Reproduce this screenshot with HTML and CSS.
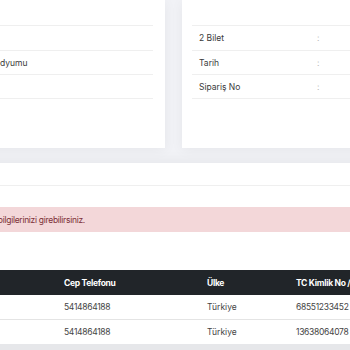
FILE: index.html
```html
<!doctype html>
<html>
<head>
    <meta charset="utf-8">
    <title>Bilet Bilgileri</title>
    <meta name="viewport" content="width=device-width, initial-scale=1">
    <link rel="stylesheet" href="styles.css">
</head>
<body class="bilet-body">
<div class="bilet-page">

    <!-- ust kartlar -->
    <div class="bilet-cards">
        <div class="bilet-card bilet-card-left">
            <div class="bilet-row bilet-row-first"><span>Etkinlik</span><span class="bilet-colon">:</span><span></span></div>
            <div class="bilet-row"><span></span><span class="bilet-colon"></span><span></span></div>
            <div class="bilet-row"><span>Yer</span><span class="bilet-colon">:</span><span>Stadyumu</span></div>
            <div class="bilet-row bilet-row-last"><span></span><span class="bilet-colon"></span><span></span></div>
        </div>
        <div class="bilet-card bilet-card-right">
            <div class="bilet-row bilet-row-first"><span></span><span></span><span></span></div>
            <div class="bilet-row"><span>2 Bilet</span><span class="bilet-colon">:</span><span></span></div>
            <div class="bilet-row"><span>Tarih</span><span class="bilet-colon">:</span><span></span></div>
            <div class="bilet-row bilet-row-last"><span>Sipariş No</span><span class="bilet-colon">:</span><span></span></div>
        </div>
    </div>

    <!-- yolcu bilgileri -->
    <div class="bilet-panel">
        <div class="bilet-panel-head"></div>
        <div class="bilet-panel-body">
            <div class="bilet-alert">
                <span class="bilet-alert-text">Lütfen bilet sahiplerinin bilgilerini kontrol ediniz, eksik bilgilerinizi girebilirsiniz.</span>
            </div>

            <div class="bilet-table-wrap">
                <table class="bilet-table">
                    <colgroup>
                        <col style="width: 226px">
                        <col style="width: 143px">
                        <col style="width: 89px">
                        <col>
                    </colgroup>
                    <thead>
                    <tr>
                        <th>Ad Soyad</th>
                        <th>Cep Telefonu</th>
                        <th>Ülke</th>
                        <th>TC Kimlik No / Pasaport No</th>
                    </tr>
                    </thead>
                    <tbody>
                    <tr>
                        <td>Ahmet Yılmaz</td>
                        <td class="bilet-num">5414864188</td>
                        <td>Türkiye</td>
                        <td class="bilet-num">68551233452</td>
                    </tr>
                    <tr>
                        <td>Mehmet Yılmaz</td>
                        <td class="bilet-num">5414864188</td>
                        <td>Türkiye</td>
                        <td class="bilet-num">13638064078</td>
                    </tr>
                    </tbody>
                </table>
            </div>
        </div>
    </div>

</div>
</body>
</html>
```

FILE: styles.css
```css
.bilet-body {
    margin: 0;
    overflow: hidden;
    background: #f1f2f6;
    font-family: 'Inter', 'Noto Sans', sans-serif;
    font-size: 8.5px;
    color: #3a3a3a;
}

/* sayfa, ekranin solundan tasiyor */
.bilet-page {
    width: 700px;
    margin-left: -170px;
}

.bilet-cards {
    display: flex;
    gap: 17px;
}

.bilet-card {
    background: #fff;
    height: 148px;
    box-sizing: border-box;
    box-shadow: 0 2px 12px 0 rgba(0, 0, 0, 0.05);
}

.bilet-card-left {
    width: 335px;
    padding: 0 12px 0 18px;
}

.bilet-card-right {
    width: 348px;
    padding: 0 0 0 10px;
}

.bilet-row {
    display: grid;
    grid-template-columns: 118px 14px 1fr;
    align-items: center;
    height: 24.7px;
    padding-left: 7px;
    border-top: 1px solid #efefef;
    box-sizing: border-box;
}

.bilet-row-first {
    border-top: 0;
    height: 25px;
}

.bilet-row-last {
    border-bottom: 1px solid #efefef;
}

.bilet-colon {
    color: #b5b5b5;
}

.bilet-panel {
    margin-top: 15px;
    background: #fff;
    box-shadow: 0 -2px 12px 0 rgba(0, 0, 0, 0.05);
}

.bilet-panel-head {
    height: 22px;
    border-bottom: 1px solid #efefef;
}

.bilet-panel-body {
    padding: 21px 0 0;
}

.bilet-alert {
    background: #f3d7d9;
    color: #7c2f36;
    height: 25px;
    display: flex;
    align-items: center;
}

/* metin sola tasiyor, sonu x=85'te */
.bilet-alert-text {
    width: 255px;
    flex: none;
    display: flex;
    justify-content: flex-end;
    white-space: nowrap;
    letter-spacing: -0.3px;
}

.bilet-table-wrap {
    margin-top: 38px;
    background: #fff;
    border-bottom: 8px solid #e6e7ea;
}

.bilet-table {
    width: 700px;
    border-collapse: collapse;
    table-layout: fixed;
}

.bilet-table th {
    background: #212529;
    color: #fff;
    font-weight: 700;
    text-align: left;
    height: 25px;
    padding: 0 8px;
    white-space: nowrap;
    letter-spacing: -0.3px;
}

.bilet-table td {
    height: 24px;
    padding: 0 8px;
    color: #444;
    white-space: nowrap;
}

.bilet-table .bilet-num {
    letter-spacing: -0.3px;
}

.bilet-table tbody tr + tr td {
    border-top: 1px solid #e4e4e4;
}
```
